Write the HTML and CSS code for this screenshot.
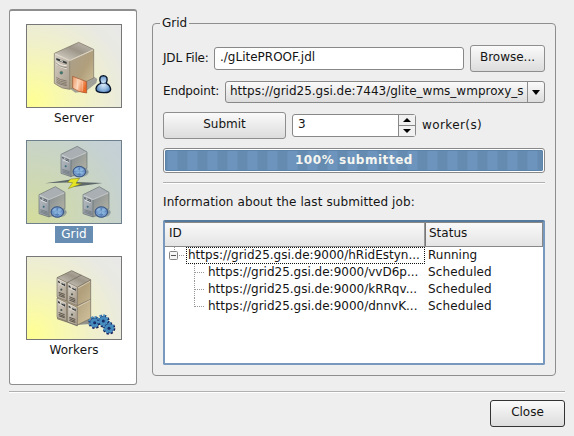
FILE: index.html
```html
<!DOCTYPE html>
<html lang="en">
<head>
<meta charset="utf-8">
<title>Grid</title>
<link rel="stylesheet" href="styles.css">
</head>
<body>
<svg class="defs" width="0" height="0" aria-hidden="true">
  <defs>
    <linearGradient id="front" x1="0" y1="0" x2="1" y2="1"><stop offset="0" stop-color="#d5cfc4"/><stop offset="1" stop-color="#a89c8c"/></linearGradient>
    <linearGradient id="side" x1="0" y1="0" x2="1" y2="1"><stop offset="0" stop-color="#aaa08e"/><stop offset=".55" stop-color="#b19f7c"/><stop offset="1" stop-color="#d3c49e"/></linearGradient>
    <linearGradient id="top" x1="0" y1="1" x2="1" y2="0"><stop offset="0" stop-color="#ddd8ce"/><stop offset=".55" stop-color="#9c9588"/><stop offset="1" stop-color="#c9c3b8"/></linearGradient>
    <linearGradient id="gfront" x1="0" y1="0" x2="1" y2="1"><stop offset="0" stop-color="#b9bfc4"/><stop offset="1" stop-color="#8c949b"/></linearGradient>
    <linearGradient id="gside" x1="0" y1="0" x2="1" y2="1"><stop offset="0" stop-color="#838b91"/><stop offset="1" stop-color="#b9b8a6"/></linearGradient>
    <linearGradient id="orange" x1="0" y1="0" x2="1" y2=".4"><stop offset="0" stop-color="#ed9a68"/><stop offset=".5" stop-color="#fbd3b5"/><stop offset="1" stop-color="#ea6825"/></linearGradient>
    <radialGradient id="user" cx=".5" cy=".5" r=".6"><stop offset="0" stop-color="#e3f0fb"/><stop offset=".6" stop-color="#8bb2dc"/><stop offset="1" stop-color="#3e70ad"/></radialGradient>
    <radialGradient id="globe"><stop offset="0" stop-color="#b9dcf2"/><stop offset=".5" stop-color="#5684bb"/><stop offset=".8" stop-color="#7d9dcc"/><stop offset="1" stop-color="#365990"/></radialGradient>
    <g id="node">
      <path d="M213 138l42-19 11 6-24 17z" fill="#7d868c" opacity=".55"/>
      <path d="M232 49l29 17-48 21-30-14z" fill="#a9afb3"/>
      <path d="M183 73l30 14v53l-30-10z" fill="url(#gfront)"/>
      <path d="M213 87l48-21v49l-48 25z" fill="url(#gside)"/>
      <path d="M183 73l49-24 29 17v49l-48 25-30-10zM213 87v53" fill="none" stroke="#60686d" stroke-width="1.800"/>
      <path d="M185 75l28 13 46-20" fill="none" stroke="#d6dadc" stroke-width="2"/>
      <path d="M187 80l6 3v5l-6-3zM196 84l11 5-1 7-10-5z" fill="#3d464d"/>
      <path d="M189 90l17 7" stroke="#dbe0e2" stroke-width="3"/><path d="M190 84l16 8" stroke="#eef0f0" stroke-width="1.500"/>
      <circle cx="197" cy="109" r="3" fill="#38697d"/>
      <path d="M187 118l22 7M187 122l22 7M187 126l22 7" stroke="#596269" stroke-width="1.600"/>
      <ellipse cx="247" cy="126" rx="19" ry="14" fill="#75848e" opacity=".6"/>
      <ellipse cx="238" cy="125" rx="19" ry="16" fill="url(#globe)" stroke="#30517f" stroke-width="2.500"/>
      <path d="M225 117l8-4 4 4-5 4 4 6-5 5-5-5zM242 114l8 4-2 4 4 5-7 7-6-7 4-4-4-5z" fill="#9ac5e8" opacity=".7"/>
      <path d="M220 125h36M238 110v30" stroke="#3d6bab" stroke-width="1"/>
    </g>
    <g id="mini">
      <path d="M171 83l29 15v55l-29-12z" fill="url(#front)" stroke="#6c665c" stroke-width="1.700"/>
      <path d="M173 87l25 12" stroke="#eee9df" stroke-width="2"/>
      <path d="M174 92l6 3v5l-6-3zM184 97l11 5v7l-10-5z" fill="#333b3e"/>
      <path d="M176 101l17 8M179 95l14 7" stroke="#eeeae2" stroke-width="2"/>
      <circle cx="184" cy="119" r="3.200" fill="#4b584f"/>
      <path d="M176 125l18 7v3l-18-7zM176 130l18 7v3l-18-7zM176 135l18 6v3l-18-6z" fill="#595347"/>
    </g>
    <g id="gear">
      <circle r="14" fill="none" stroke="#13205a" stroke-width="10" stroke-dasharray="6 5"/>
      <circle r="14" fill="#448abc" stroke="#1b397a" stroke-width="2"/>
      <circle cx="-2" cy="-3" r="14" fill="none" stroke="#4c94c4" stroke-width="6" stroke-dasharray="6 5"/>
      <circle r="4.500" fill="#152b66"/>
    </g>
  </defs>
</svg>

<div class="dialog">
  <main class="content">
    <nav class="pages">
      <a class="page">
        <svg class="thumb" viewBox="81 75 282 246">
          <path d="M211 267l71-37 10 7-3 12-31 25-32 4z" fill="#77777c" opacity=".65"/>
          <path d="M236 127l45 21-72 32-46-20z" fill="url(#top)"/>
          <path d="M163 160l46 20v88q-24 0-46-18z" fill="url(#front)"/>
          <path d="M209 180l72-32v86l-72 34z" fill="url(#side)"/>
          <path d="M163 160l73-33 45 21v86l-72 34q-24 0-46-18zM209 180v88" fill="none" stroke="#7a7264" stroke-width="2"/>
          <path d="M165 162l44 20 70-32" fill="none" stroke="#e8e2d6" stroke-width="2.500"/>
          <path d="M169 174l31 12v6l-31-12z" fill="#343b3d"/><path d="M180 178l9 4v5l-9-4z" fill="#c8c4bd"/>
          <path d="M168 184q10 13 32 13M168 191q14 13 32 15" fill="none" stroke="#efebe3" stroke-width="3"/>
          <path d="M168 188q10 14 32 15" fill="none" stroke="#696257" stroke-width="1.500"/>
          <circle cx="184" cy="218" r="4.500" fill="#3a7870" stroke="#5d6057"/>
          <path d="M169 232q10 8 31 11M169 237q10 8 31 11M169 242q10 8 31 11M169 247q10 7 31 10" fill="none" stroke="#635b4d" stroke-width="1.800"/>
          <path d="M218 229l42 16v34q-26-2-42-15z" fill="url(#orange)" stroke="#9b532e" stroke-width="2"/>
          <path d="M232 237v31M247 243v31" stroke="#fff0df" stroke-width="2" opacity=".6"/>
          <path d="M302 250q-8-22 8-23 17 1 9 23 11 5 13 17 1 12-22 11-23 0-22-12 2-12 14-16z" fill="url(#user)" stroke="#071326" stroke-width="4"/>
          <path d="M301 248q9 6 18 0" fill="none" stroke="#17345c" stroke-width="2.500"/>
        </svg>
        <span class="page-name">Server</span>
      </a>
      <a class="page selected">
        <svg class="thumb" viewBox="81 33 282 246">
          <use href="#node"/>
          <use href="#node" x="-66" y="121"/>
          <use href="#node" x="66" y="121"/>
          <path d="M135 160l103-15-9 11 79 3-94 13 8-15z" fill="#5c676a"/>
          <path d="M212 147l27-2-11 15 17 1-40 15 13-18-15-1z" fill="#e5e621" stroke="#777c2c" stroke-width="1.500"/>
        </svg>
        <span class="page-name">Grid</span>
      </a>
      <a class="page">
        <svg class="thumb" viewBox="81 21 282 246">
          <path d="M231 225l40-21 42 5-35 12z" fill="#696b72" opacity=".7"/>
          <path d="M215 62l57 27v116l-42 21-59-20V83z" fill="url(#side)"/>
          <path d="M215 62l57 27-40 21-61-27z" fill="url(#top)"/>
          <use href="#mini" y="61"/>
          <use href="#mini" x="32" y="75"/>
          <use href="#mini"/>
          <use href="#mini" x="32" y="14"/>
          <path d="M171 83l44-21 57 27v116l-42 21-59-20M201 98l43-23M233 111l39-21M232 167l40-19" fill="none" stroke="#6c665c" stroke-width="2"/>
          <path d="M234 114l36-20M234 170l36-19" stroke="#eee8dc" stroke-width="1.700"/>
          <use href="#gear" x="284" y="218"/>
          <use href="#gear" x="310" y="213"/>
          <use href="#gear" x="327" y="235"/>
        </svg>
        <span class="page-name">Workers</span>
      </a>
    </nav>

    <fieldset class="group">
      <legend>Grid</legend>
      <div class="row file-row">
        <label>JDL File:</label>
        <div class="field">./gLitePROOF.jdl</div>
        <button class="btn browse">Browse...</button>
      </div>
      <div class="row endpoint-row">
        <label>Endpoint:</label>
        <div class="combo">
          <span class="combo-text">https://grid25.gsi.de:7443/glite_wms_wmproxy_s</span>
          <span class="combo-arrow"><svg width="8" height="5"><path d="M0 0h8L4 5z"/></svg></span>
        </div>
      </div>
      <div class="row submit-row">
        <button class="btn submit">Submit</button>
        <div class="spin">
          <span class="spin-value">3</span>
          <span class="spin-buttons">
            <i><svg width="8" height="4"><path d="M0 4h8L4 0z"/></svg></i>
            <i><svg width="8" height="4"><path d="M0 0h8L4 4z"/></svg></i>
          </span>
        </div>
        <span class="unit">worker(s)</span>
      </div>
      <div class="progress"><div class="bar">100% submitted</div></div>
      <div class="rule"></div>
      <div class="caption">Information about the last submitted job:</div>
      <div class="tree">
        <div class="tree-head"><span>ID</span><span>Status</span></div>
        <div class="tree-row root">
          <svg class="branch" width="21" height="17"><path class="dots" d="M9.500 0v5M14 8.500h5"/><rect x="4.500" y="4.500" width="8" height="8" rx="1" fill="#f6f6f6" stroke="#858585"/><path d="M6 8.500h5" stroke="#555"/></svg>
          <span class="id focus">https://grid25.gsi.de:9000/hRidEstyn...</span><span>Running</span>
        </div>
        <div class="tree-row">
          <svg class="branch" width="41" height="17"><path class="dots" d="M29.500 0v17M30 8.500h9"/></svg>
          <span class="id">https://grid25.gsi.de:9000/vvD6p...</span><span class="state">Scheduled</span>
        </div>
        <div class="tree-row">
          <svg class="branch" width="41" height="17"><path class="dots" d="M29.500 0v17M30 8.500h9"/></svg>
          <span class="id">https://grid25.gsi.de:9000/kRRqv...</span><span class="state">Scheduled</span>
        </div>
        <div class="tree-row">
          <svg class="branch" width="41" height="17"><path class="dots" d="M29.500 0v9M30 8.500h9"/></svg>
          <span class="id">https://grid25.gsi.de:9000/dnnvK...</span><span class="state">Scheduled</span>
        </div>
      </div>
    </fieldset>
  </main>
  <div class="rule footer-rule"></div>
  <footer><button class="btn close">Close</button></footer>
</div>
</body>
</html>
```

FILE: styles.css
```css
* { box-sizing: border-box; }
body {
  margin: 0;
  background: #eee;
  color: #141414;
  font: 12px/15px "DejaVu Sans", sans-serif;
}
.defs { display: block; }
.dialog {
  width: 574px;
  height: 436px;
  padding: 9px;
  overflow: hidden;
}
.content {
  display: flex;
  gap: 15px;
  height: 376px;
}
.pages {
  width: 128px;
  height: 376px;
  padding: 13px 0 0 2px;
  display: flex;
  flex-direction: column;
  align-items: center;
  background: #fff;
  border: 1px solid #8e8e8e;
  border-top-width: 2px;
  border-radius: 3px;
}
.page {
  height: 116px;
  display: flex;
  flex-direction: column;
  align-items: center;
  gap: 2px;
}
.thumb {
  display: block;
  width: 96px;
  height: 84px;
  border: 1px solid #777;
  background: radial-gradient(circle at 5% 95%, #ffff94 0, #fbfba5 15%, #f0f0ca 50%, #e9e9e3 82%, #e8e8e8 100%);
}
.selected .thumb {
  border-color: #6f7f8b;
  background: radial-gradient(circle at 5% 95%, #d4dc9d 0, #d0daa9 15%, #cbd6bf 50%, #c5d1d2 82%, #c4d0d8 100%);
}
.page-name {
  padding: 1px 6px;
  letter-spacing: .1px;
}
.selected .page-name {
  background: #678db2;
  color: #fff;
}
.group {
  width: 404px;
  height: 361px;
  min-width: 0;
  margin: 6px 0 0;
  padding: 13px 10px 0;
  border: 1px solid #8e8e8e;
  border-radius: 4px;
}
legend {
  margin-left: -3px;
  padding: 0 2px;
  height: 17px;
  line-height: 17px;
}
.row {
  display: flex;
  align-items: center;
}
.file-row { height: 27px; }
.file-row label {
  width: 51px;
  padding-bottom: 1px;
  white-space: nowrap;
  letter-spacing: -.2px;
}
.field {
  width: 250px;
  height: 23px;
  padding: 2px 5px;
  background: #fff;
  border: 1px solid #888;
  border-radius: 3px;
}
.btn {
  height: 27px;
  padding: 0 0 2px;
  font: inherit;
  color: inherit;
  border: 1px solid #8e8e8e;
  border-radius: 3px;
  background: linear-gradient(#fafafa, #dcdcdc);
}
.browse { width: 75px; margin-left: 6px; }
.endpoint-row { height: 22px; margin-top: 9px; }
.endpoint-row label {
  width: 62px;
  padding-bottom: 2px;
  letter-spacing: -.15px;
}
.combo {
  display: flex;
  width: 320px;
  height: 22px;
  border: 1px solid #888;
  border-radius: 3px;
  background: linear-gradient(#fafafa, #dcdcdc);
}
.combo-text {
  flex: 1;
  padding: 2px 0 0 4px;
  overflow: hidden;
  white-space: nowrap;
}
.combo-arrow {
  width: 17px;
  display: flex;
  align-items: center;
  justify-content: center;
  border-left: 1px solid #8e8e8e;
}
.submit-row { height: 27px; margin-top: 9px; }
.submit { width: 123px; }
.spin {
  display: flex;
  width: 124px;
  height: 23px;
  margin: 0 6px;
  border: 1px solid #888;
  border-radius: 3px;
  background: #fff;
}
.spin-value { flex: 1; padding: 2px 5px; }
.spin-buttons {
  width: 17px;
  display: flex;
  flex-direction: column;
  border-left: 1px solid #888;
  background: #f1f1f1;
}
.spin-buttons i {
  flex: 1;
  display: flex;
  align-items: center;
  justify-content: center;
}
.spin-buttons i + i { border-top: 1px solid #888; }
.unit {
  padding-bottom: 1px;
  letter-spacing: .4px;
}
.progress {
  height: 25px;
  margin-top: 9px;
  padding: 1px;
  border: 1px solid #888;
  border-radius: 3px;
  background: #fff;
}
.bar {
  height: 21px;
  color: #f6f6f0;
  font-weight: bold;
  line-height: 18px;
  letter-spacing: .55px;
  text-align: center;
  border: 1px solid #5c84ab;
  border-radius: 1px;
  background: repeating-linear-gradient(90deg, #658bb0 0 1px, #6d94bd 2px 11px, #658bb0 12px 20px);
}
.rule {
  height: 2px;
  border-top: 1px solid #b0b0b0;
  border-bottom: 1px solid #fff;
}
.group .rule { margin-top: 9px; }
.caption {
  margin-top: 11px;
  letter-spacing: .1px;
}
.tree {
  height: 145px;
  margin-top: 10px;
  border: 2px solid #7699bd;
  border-top-color: #567a9e;
  border-radius: 2px;
  background: #fff;
}
.tree-head {
  display: flex;
  height: 25px;
  line-height: 21px;
  border: 1px solid #888;
  border-width: 1px 1px 1px 0;
  background: linear-gradient(#f9f9f9, #e4e4e4);
}
.tree-head span { width: 260px; padding-left: 4px; border-right: 1px solid #999; }
.tree-head span + span { width: auto; flex: 1; padding-left: 3px; border-left: 1px solid #777; border-right: 0; }
.tree-row {
  display: flex;
  height: 17px;
  line-height: 16px;
  white-space: nowrap;
}
.branch { flex: none; }
.tree-row .id { width: 219px; padding-left: 2px; }
.tree-row .focus { width: 239px; }
.root .focus { padding-left: 1px; border: 1px dotted #111; line-height: 14px; }
.tree-row .id + span { padding-left: 3px; }
.tree-row .state { letter-spacing: .12px; }
.dots { fill: none; stroke: #999; stroke-dasharray: 1 1; }
.footer-rule { margin-top: 6px; }
footer {
  display: flex;
  justify-content: flex-end;
  padding-top: 7px;
}
.close { width: 75px; border-color: #333; }
```
